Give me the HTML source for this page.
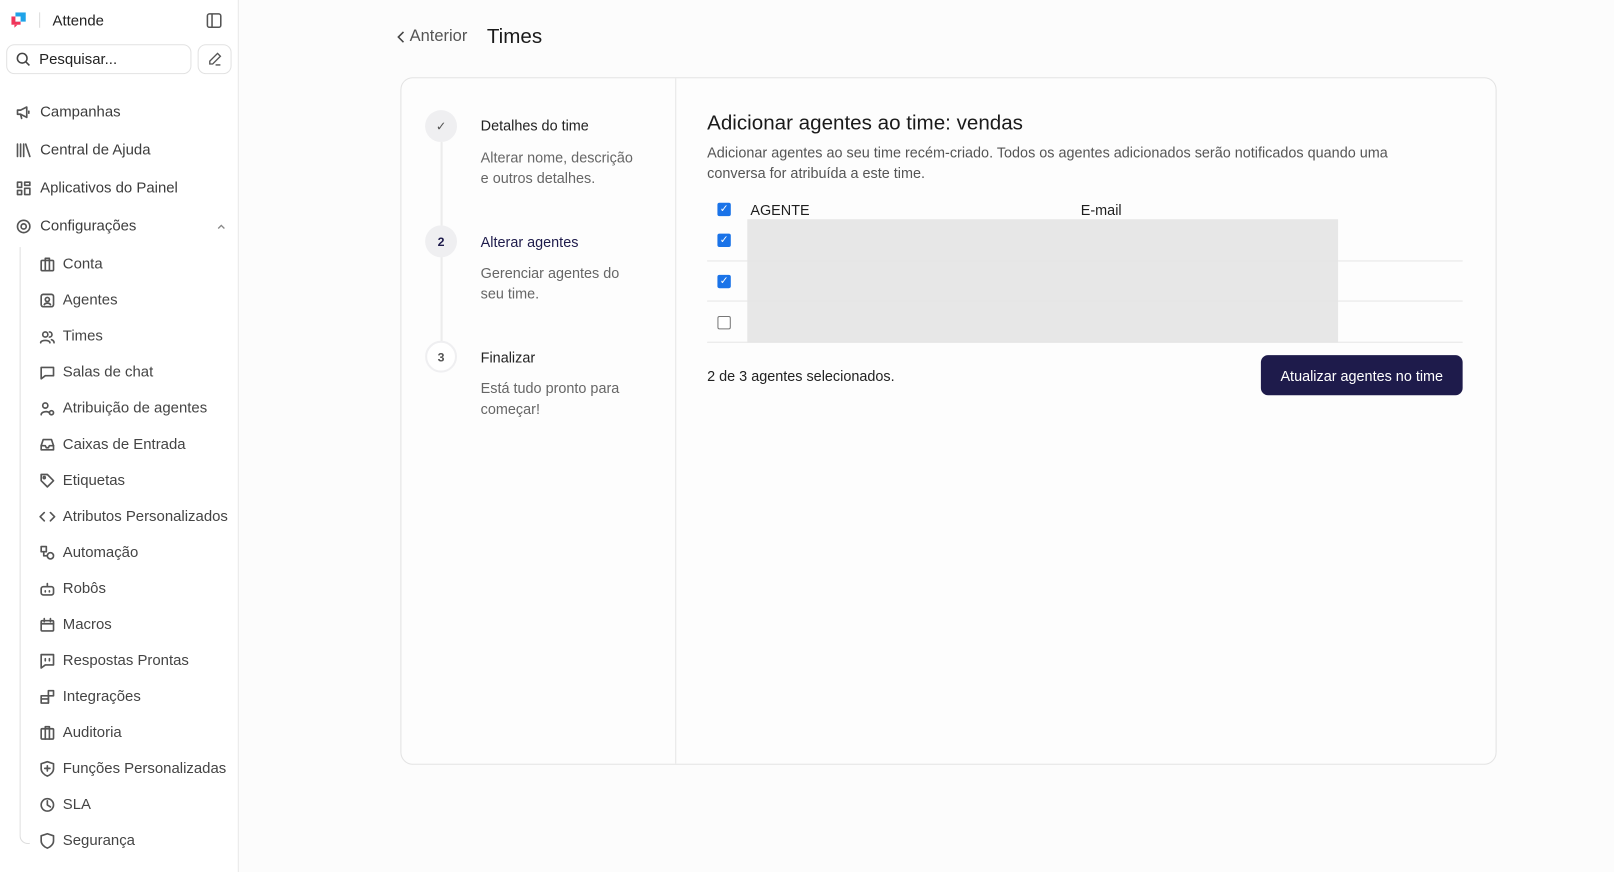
<!DOCTYPE html>
<html><head><meta charset="utf-8"><style>
*{box-sizing:border-box;margin:0;padding:0}
html,body{width:1614px;height:872px;overflow:hidden}
body{font-family:"Liberation Sans",sans-serif;background:#fcfcfc;color:#1f1f1f}
#w{position:relative;width:1568px;height:848px;transform:scale(1.0293);transform-origin:0 0}
.sb{position:absolute;left:0;top:0;width:232px;height:848px;background:#fff;border-right:1px solid #e8e8e8}
.abs{position:absolute}
.it{position:absolute;left:15px;font-size:14.5px;color:#3c3c3c;display:flex;align-items:center;gap:8px}
.it svg,.si svg{width:16px;height:16px;stroke:#555;fill:none;stroke-width:1.6;stroke-linecap:round;stroke-linejoin:round}
.si{position:absolute;left:38px;font-size:14.5px;color:#444;display:flex;align-items:center;gap:7px}
.card{position:absolute;left:389px;top:75px;width:1065px;height:668px;border:1px solid #e3e3e3;border-radius:12px;background:#fdfdfd}
.circ{position:absolute;left:413px;width:31px;height:31px;border-radius:50%;background:#efeff1;font-size:12px;font-weight:bold;color:#333;display:flex;align-items:center;justify-content:center}
.st{position:absolute;left:467px;font-size:14px;color:#222}
.sd{position:absolute;left:467px;font-size:14px;color:#666;line-height:20px;width:150px}
.cb{position:absolute;left:697px;width:13px;height:13px;border-radius:2px;background:#1a73e8;color:#fff;font-size:10px;line-height:13px;text-align:center}
.cb.off{background:#fff;border:1px solid #777}
.rl{position:absolute;left:687px;width:734px;height:1px;background:#e6e6e6}
</style></head><body><div id="w">
<div class="sb">
 <svg class="abs" style="left:11px;top:12px" width="15" height="15" viewBox="0 0 15 15"><rect x="0" y="4" width="9" height="8" fill="#f0355a"/><rect x="4" y="0" width="10" height="9" fill="#1fa3e8"/><rect x="4" y="4" width="5" height="5" fill="#fff"/><path d="M3 12 L3 15 L6 12Z" fill="#f0355a"/></svg>
 <div class="abs" style="left:38px;top:12px;width:1px;height:15px;background:#ddd"></div>
 <div class="abs" style="left:51px;top:13px;font-size:14.5px;color:#222">Attende</div>
 <svg class="abs" style="left:200px;top:12px" width="16" height="16" viewBox="0 0 16 16" fill="none" stroke="#555" stroke-width="1.5"><rect x="1.5" y="1.5" width="13" height="13" rx="2"/><path d="M6 2v12"/></svg>
 <div class="abs" style="left:6px;top:43px;width:180px;height:29px;border:1px solid #e2e2e2;border-radius:8px"></div>
 <svg class="abs" style="left:15px;top:50px" width="15" height="15" viewBox="0 0 16 16" fill="none" stroke="#444" stroke-width="1.6"><circle cx="7" cy="7" r="5"/><path d="M11 11l3.5 3.5"/></svg>
 <div class="abs" style="left:38px;top:50px;font-size:14.5px;color:#222">Pesquisar...</div>
 <div class="abs" style="left:192px;top:43px;width:33px;height:29px;border:1px solid #e2e2e2;border-radius:8px"></div>
 <svg class="abs" style="left:201px;top:50px" width="15" height="15" viewBox="0 0 16 16" fill="none" stroke="#555" stroke-width="1.4"><path d="M11 2l3 3-8 8H3v-3z"/><path d="M9 14h5"/></svg>
 <div class="it" style="top:101px"><svg viewBox="0 0 16 16"><path d="M2 6v4h3l6 3V3L5 6z"/><path d="M5 10l1 4"/><path d="M13 7v2"/></svg>Campanhas</div>
 <div class="it" style="top:138px"><svg viewBox="0 0 16 16"><path d="M2 2v12M5 2v12M8 2v12M10 2l4 12"/></svg>Central de Ajuda</div>
 <div class="it" style="top:175px"><svg viewBox="0 0 16 16"><rect x="2" y="2" width="4" height="5"/><rect x="9" y="2" width="5" height="3"/><rect x="2" y="10" width="4" height="4"/><rect x="9" y="8" width="5" height="6"/></svg>Aplicativos do Painel</div>
 <div class="it" style="top:212px"><svg viewBox="0 0 16 16"><circle cx="8" cy="8" r="6"/><circle cx="8" cy="8" r="2.5"/></svg>Configurações</div>
 <svg class="abs" style="left:210px;top:216px" width="10" height="8" viewBox="0 0 10 8" fill="none" stroke="#888" stroke-width="1.3"><path d="M2 6l3-3 3 3"/></svg>
 <div class="abs" style="left:19px;top:240px;width:10px;height:580px;border-left:1.5px solid #ddd;border-bottom:1.5px solid #ddd;border-bottom-left-radius:8px"></div>
 <div class="si" style="top:249px"><svg viewBox="0 0 16 16"><rect x="2" y="4" width="12" height="10" rx="1"/><path d="M6 4V2h4v2M6 4v10M10 4v10"/></svg>Conta</div>
 <div class="si" style="top:284px"><svg viewBox="0 0 16 16"><rect x="2" y="2" width="12" height="12" rx="2"/><circle cx="8" cy="7" r="2"/><path d="M5 12c1-2 5-2 6 0"/></svg>Agentes</div>
 <div class="si" style="top:319px"><svg viewBox="0 0 16 16"><circle cx="6" cy="6" r="2.5"/><path d="M1.5 14c0-3 9-3 9 0"/><path d="M10 3.5a2.5 2.5 0 010 5M12 11c1.5.5 2.5 1.5 2.5 3"/></svg>Times</div>
 <div class="si" style="top:354px"><svg viewBox="0 0 16 16"><path d="M2 3h12v8H6l-4 3z"/></svg>Salas de chat</div>
 <div class="si" style="top:389px"><svg viewBox="0 0 16 16"><circle cx="6" cy="5" r="2.5"/><path d="M2 14c0-3 6-4 8-2"/><circle cx="12" cy="12" r="2"/></svg>Atribuição de agentes</div>
 <div class="si" style="top:424px"><svg viewBox="0 0 16 16"><path d="M2 9l2-6h8l2 6v4H2z"/><path d="M2 9h4l1 2h2l1-2h4"/></svg>Caixas de Entrada</div>
 <div class="si" style="top:459px"><svg viewBox="0 0 16 16"><path d="M2 2h6l6 6-6 6-6-6z"/><circle cx="5" cy="5" r="1"/></svg>Etiquetas</div>
 <div class="si" style="top:494px"><svg viewBox="0 0 16 16"><path d="M5 4L1 8l4 4M11 4l4 4-4 4"/></svg>Atributos Personalizados</div>
 <div class="si" style="top:529px"><svg viewBox="0 0 16 16"><rect x="2" y="2" width="5" height="5"/><circle cx="11" cy="11" r="3"/><path d="M4.5 7v4h3"/></svg>Automação</div>
 <div class="si" style="top:564px"><svg viewBox="0 0 16 16"><rect x="2" y="6" width="12" height="8" rx="2"/><path d="M8 6V3"/><path d="M6 10v1M10 10v1"/></svg>Robôs</div>
 <div class="si" style="top:599px"><svg viewBox="0 0 16 16"><rect x="2" y="4" width="12" height="10" rx="1"/><path d="M2 7h12M5 2v3M11 2v3"/></svg>Macros</div>
 <div class="si" style="top:634px"><svg viewBox="0 0 16 16"><path d="M2 2h12v10H6l-4 3z"/><path d="M6 6v2M10 6v2"/></svg>Respostas Prontas</div>
 <div class="si" style="top:669px"><svg viewBox="0 0 16 16"><rect x="2" y="7" width="7" height="7"/><rect x="9" y="2" width="5" height="5"/><path d="M9 7v7M2 10h7"/></svg>Integrações</div>
 <div class="si" style="top:704px"><svg viewBox="0 0 16 16"><rect x="2" y="4" width="12" height="10" rx="1"/><path d="M6 4V2h4v2M6 4v10M10 4v10"/></svg>Auditoria</div>
 <div class="si" style="top:739px"><svg viewBox="0 0 16 16"><path d="M8 1l6 2v5c0 3-3 6-6 7-3-1-6-4-6-7V3z"/><path d="M8 5v5M5.5 7.5h5"/></svg>Funções Personalizadas</div>
 <div class="si" style="top:774px"><svg viewBox="0 0 16 16"><circle cx="8" cy="8" r="6"/><path d="M8 4v4l3 2"/></svg>SLA</div>
 <div class="si" style="top:809px"><svg viewBox="0 0 16 16"><path d="M8 1l6 2v5c0 3-3 6-6 7-3-1-6-4-6-7V3z"/></svg>Segurança</div>
</div>

<svg class="abs" style="left:385px;top:29px" width="10" height="14" viewBox="0 0 10 14" fill="none" stroke="#444" stroke-width="1.5"><path d="M7 2L2 7l5 5"/></svg>
<div class="abs" style="left:398px;top:27px;font-size:16px;color:#555">Anterior</div>
<div class="abs" style="left:473px;top:25px;font-size:20px;color:#1a1a1a">Times</div>

<div class="card"></div>
<div class="abs" style="left:656px;top:76px;width:1px;height:666px;background:#e6e6e6"></div>
<div class="abs" style="left:428px;top:138px;width:2px;height:194px;background:#ececec"></div>
<div class="circ" style="top:107px;font-weight:normal;color:#555">✓</div>
<div class="circ" style="top:219px;color:#1e1b4b">2</div>
<div class="circ" style="top:331px;background:#fff;border:2px solid #efeff1;color:#555">3</div>
<div class="st" style="top:114px">Detalhes do time</div>
<div class="sd" style="top:143px">Alterar nome, descrição e outros detalhes.</div>
<div class="st" style="top:227px;color:#1e1b4b">Alterar agentes</div>
<div class="sd" style="top:255px">Gerenciar agentes do seu time.</div>
<div class="st" style="top:339px">Finalizar</div>
<div class="sd" style="top:367px">Está tudo pronto para começar!</div>

<div class="abs" style="left:687px;top:109px;font-size:20px;color:#1a1a1a">Adicionar agentes ao time: vendas</div>
<div class="abs" style="left:687px;top:138px;width:720px;font-size:14px;line-height:20px;color:#555">Adicionar agentes ao seu time recém-criado. Todos os agentes adicionados serão notificados quando uma conversa for atribuída a este time.</div>
<div class="cb" style="top:197px">✓</div>
<div class="abs" style="left:729px;top:196px;font-size:14px">AGENTE</div>
<div class="abs" style="left:1050px;top:196px;font-size:14px">E-mail</div>
<div class="abs" style="left:726px;top:213px;width:574px;height:120px;background:#e7e7e7"></div>
<div class="cb" style="top:227px">✓</div>
<div class="cb" style="top:267px">✓</div>
<div class="cb off" style="top:307px"></div>
<div class="rl" style="top:253px"></div>
<div class="rl" style="top:292px"></div>
<div class="rl" style="top:332px"></div>
<div class="abs" style="left:687px;top:357px;font-size:14px;color:#222">2 de 3 agentes selecionados.</div>
<div class="abs" style="left:1225px;top:345px;width:196px;height:39px;border-radius:7px;background:#1e1b4b;color:#fff;font-size:14px;display:flex;align-items:center;justify-content:center">Atualizar agentes no time</div>
</div></body></html>
